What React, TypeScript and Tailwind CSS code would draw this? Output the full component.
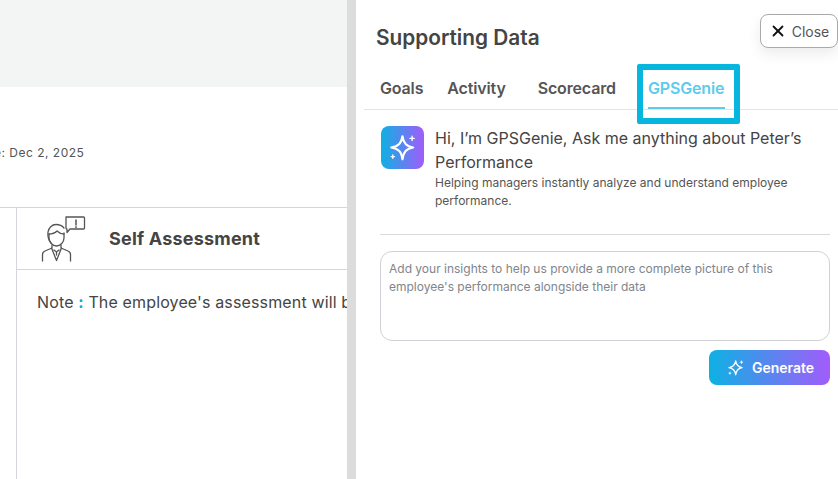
import { X } from 'lucide-react'

function Sparkle({ className }: { className: string }) {
  return (
    <svg viewBox="0 0 28 28" fill="none" stroke="currentColor" strokeWidth="2" strokeLinejoin="round" strokeLinecap="round" className={className}>
      <path d="M13.500 3c1 6.500 3.500 9.500 10 10.500-6.500 1-9 4-10 11-1-7-3.500-10-10.500-11 7-1 9.500-4 10.500-10.500z" />
      <path d="M22.500 3v4M20.500 5h4" strokeWidth="1.300" />
      <path d="M4.500 20.500v3M3 22h3" strokeWidth="1.300" />
    </svg>
  )
}

function PersonIcon() {
  return (
    <svg viewBox="0 0 46 46" fill="none" stroke="#555" strokeWidth="1.300" strokeLinecap="round" strokeLinejoin="round" className="ml-[-1px] h-[46px] w-[46px] shrink-0">
      <path d="M25 1h17.500a1 1 0 0 1 1 1v10a1 1 0 0 1-1 1H29l-3 3.500V13a1 1 0 0 1-1-1z" />
      <path d="M35 4v5M35 10.800v.6" strokeWidth="1.500" />
      <path d="M10 27c-2.500-3-3.500-7-3-11 .6-4 4-7.500 8-7.500 3 0 6 1 8 3.500" />
      <path d="M8 18c3 0 6-1 8-3 1.500 1.500 4 3 7 3" />
      <path d="M8 18v4c0 4 3.500 8 7.500 8s7.500-4 7.500-8v-5" />
      <path d="M11 29v3l-7 3c-1.500.6-2.500 2-2.500 3.500V45M20 29v3l7 3c1.500.6 2.500 2 2.500 3.500V45" />
      <path d="M10.500 32l5 12.500 5-12.500M13 34l2.500 2 2.500-2M15.500 36v3" />
    </svg>
  )
}

export default function App() {
  return (
    <div className="relative flex h-[479px] w-[838px] overflow-hidden bg-white font-['Inter',sans-serif] text-[#444]">
      {/* page behind the drawer */}
      <div className="w-[347px] shrink-0 overflow-hidden">
        <div className="h-[87px] bg-[#f3f5f4]" />
        <div className="h-[120px] pt-[58px] text-[12px] leading-[15px] tracking-[0.5px] whitespace-nowrap text-[#555]">
          <span className="ml-[-6px]">e: Dec 2, 2025</span>
        </div>
        <div className="flex h-[272px] border-t border-[#d3d6de]">
          <div className="w-[17px] shrink-0 border-r border-[#d3d6de]" />
          <div className="min-w-0 flex-1">
            <div className="flex h-[62px] items-center gap-[22px] border-b border-[#d3d6de] pl-[25px]">
              <PersonIcon />
              <span className="text-[18px] font-bold tracking-[0.2px] text-[#444]">Self Assessment</span>
            </div>
            <div className="pl-5 pt-[21px] text-[16px] leading-[22px] tracking-[0.14px] whitespace-nowrap text-[#444]">
              Note <span className="font-bold text-[#1a9fd0]">:</span> The employee's assessment will be
            </div>
          </div>
        </div>
      </div>
      <div className="w-[9px] shrink-0 bg-[#dcdcdc]" />

      {/* drawer */}
      <div className="min-w-0 flex-1">
        <h2 className="pl-5 pt-[25px] text-[20.800px] leading-[26px] font-semibold text-[#444]">Supporting Data</h2>
        <div className="ml-2 mt-3 flex h-[47px] border-b border-[#e3e4e6] pl-4 text-[16px] leading-[20px] font-semibold tracking-[-0.15px] text-[#555]">
          <span className="pt-[15px]">Goals</span>
          <span className="ml-6 pt-[15px]">Activity</span>
          <span className="ml-8 pt-[15px]">Scorecard</span>
          <div className="ml-8 h-[46px] w-[77px] border-b-2 border-[#5ccbec] pt-[15px] text-[#5ccbec]">GPSGenie</div>
        </div>

        <div className="flex gap-[11px] pl-[25px] pr-[8px] pt-[16px]">
          <div className="flex h-[43px] w-[43px] shrink-0 items-center justify-center rounded-lg bg-linear-to-r/srgb from-[#0db1e3] to-[#a25cfb] text-white">
            <Sparkle className="h-[30px] w-[30px]" />
          </div>
          <div className="min-w-0 flex-1">
            <p className="text-[16px] leading-[24px] text-[#444]">Hi, I’m GPSGenie, Ask me anything about Peter’s Performance</p>
            <p className="text-[12px] leading-[18px] text-[#555]">Helping managers instantly analyze and understand employee performance.</p>
          </div>
        </div>

        <div className="ml-6 mr-2 mt-[24px] border-t border-[#d9d9d9]" />

        <div className="ml-6 mr-2 mt-4 h-[90px] rounded-xl border border-[#cfd2d6] px-2 py-2 text-[12px] leading-[18px] text-[#80858c]">
          Add your insights to help us provide a more complete picture of this employee's performance alongside their data
        </div>

        <div className="mr-2 mt-[9px] flex justify-end">
          <button className="flex h-[35px] w-[121px] items-center justify-center gap-[7px] rounded-lg bg-linear-to-r/srgb from-[#0db1e3] to-[#a25cfb] pl-[2px] text-[14px] font-semibold text-white">
            <Sparkle className="h-[18px] w-[18px]" />
            Generate
          </button>
        </div>
      </div>

      {/* overlays */}
      <button className="absolute left-[760px] top-[14px] flex h-[34px] w-[78px] items-center justify-center gap-[5px] rounded-lg border border-[#a9a9a9] bg-white text-[14px] text-[#555] shadow-[0_6px_14px_rgba(0,0,0,0.08)]">
        <X className="h-[18px] w-[18px] text-[#111]" strokeWidth={2.4} />
        Close
      </button>
      <div className="absolute left-[637px] top-[64px] h-[60px] w-[103px] rounded-[2px] border-[6px] border-[#06b6df]" />
    </div>
  )
}
